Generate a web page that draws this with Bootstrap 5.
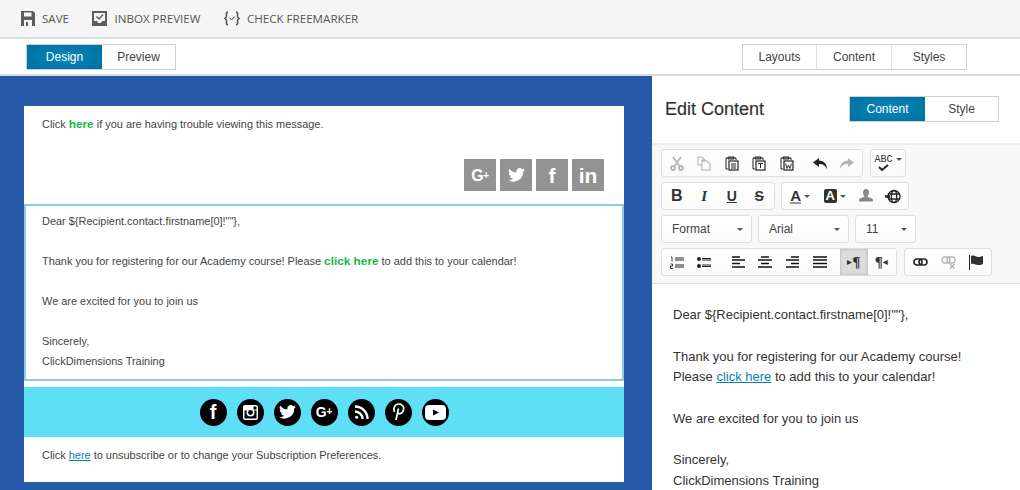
<!DOCTYPE html>
<html lang="en"><head><meta charset="utf-8"><title>Email editor</title>
<link href="https://cdn.jsdelivr.net/npm/bootstrap@5.3.0/dist/css/bootstrap.min.css" rel="stylesheet">
<style>
html,body{height:490px;overflow:hidden}
body{font-family:"Liberation Sans",Arial,sans-serif;font-size:12px;color:#333;background:#fff}
.cmdbar{height:39px;background:#f5f5f5;border-bottom:2px solid #ddd;padding-left:21px;gap:23.400px;font-family:"Open Sans",sans-serif;font-size:11.600px;color:#555}
.cmd{gap:7px}
.tabrow{height:37px;border-bottom:2px solid #ddd;padding:5px 53px 0 26px}
.seg{height:26px;border:1px solid #d0d0d0;display:flex;color:#444;background:#fff;margin-bottom:4px}
.seg>span{display:flex;align-items:center;justify-content:center}
.seg>.on{background:radial-gradient(ellipse at center,#0a83b5 0,#0077a9 70%,#00709f 100%);color:#fff}
.s75{width:75px}.s73{width:73px}.s74{width:74px}
.main{height:414px}
.canvas{width:652px;background:#265aa9;padding:30px 28px 8px 24px;flex:none}
.mail{width:600px;height:376px;background:#fff;font-size:10.950px;color:#444}
.mhead{height:98px;padding:12px 20px 0 18px;line-height:13px}
.mhead b{color:#17b84a;font-size:11.800px}
.shares{gap:4px;margin-top:28px}
.sq{width:32px;height:32px;background:#939393;color:#fff;display:flex;align-items:center;justify-content:center;font-weight:700}
.gp{font-size:16px;letter-spacing:-.3px}
.gp small,.gd small{font-size:10px;vertical-align:2px}
.ff{font-size:21px}
.ii{font-size:21px}
.gd{font-size:14px}
.block{height:177px;border:2px solid #8fc9e4;padding:5px 16px 0;line-height:20px}
.block p{margin:0 0 20px}
.block p.tight{margin:0}
.block b{color:#17b84a;font-size:11.800px}
.band{height:50px;background:#5fdff5;margin-top:6px;gap:10px}
.dot{width:27px;height:27px;border-radius:50%;background:#000;color:#fff;display:flex;align-items:center;justify-content:center;font-weight:700}
.mfoot{padding:12px 0 0 18px;line-height:13px}
.mfoot a,.rbody a{color:#0b7db0}
.side{width:368px;flex:none}
.shead{height:67px;padding:20px 21px 0 13px}
.shead h1{font-size:18px;margin:3px 0 0;font-weight:400;color:#333;-webkit-text-stroke:.2px #333}
.shead .seg{width:150px}
.tools{height:141px;background:#f8f8f8;border-top:2px solid #eee;border-bottom:1px solid #ddd;padding:4px 0 0 9px;gap:5px}
.tline{gap:7px;height:28px}
.tline.six{gap:6px}
.tg{height:28px;border:1px solid #dfdfdf;border-radius:3px;background:linear-gradient(#fff,#fafafa);display:flex;align-items:center;padding:0 1px}
.tb{width:27.500px;height:26px;display:flex;align-items:center;justify-content:center;color:#333;font-size:15px;font-weight:700;font-family:"Liberation Serif",serif}
.tb.arrow{width:34.500px}
.tb.spell{width:32px}
.tb.act{background:#dcdcdc;box-shadow:inset 0 0 3px #aaa}
.tb.w28{width:28px}
.sp1{width:5.500px}
.sp2{width:6px}
.dim{opacity:.32}
.caret{width:0;height:0;border:3px solid transparent;border-top-color:#555;border-bottom:0;margin-left:3px}
.sel{justify-content:space-between;padding:0 8px 0 10px;font-size:12px;color:#444}
.w91{width:91px}.w61{width:61px}
.sans{font-family:"Liberation Sans",sans-serif}
.abc{font:10px/9px "Liberation Mono",monospace}
.tri{font-size:6px}
.aline{border-bottom:2px solid #999;line-height:13px}
.abg{background:#333;color:#fff;border-radius:2px;padding:0 2px;line-height:14px;font-size:13px}
.rbody{padding:21px 20px 0 21px;font-size:13px;line-height:20.750px;color:#333}
.rbody p{margin:0 0 20.750px}
.rbody p.tight{margin:0}
.s14{font-size:14px}
</style></head><body>
<div class="cmdbar d-flex align-items-center">
 <div class="cmd d-flex align-items-center"><svg width="14" height="15" viewBox="0 0 14 15"><path fill="#5c5c5c" d="M0 0h12l2 2v13H0zM3 1.500v4h7.500v-4zM3 9v6h8V9z"/><rect x="5" y="11" width="2" height="4" fill="#5c5c5c"/></svg><span>SAVE</span></div>
 <div class="cmd d-flex align-items-center"><svg width="15" height="15" viewBox="0 0 15 15"><path fill="#5c5c5c" d="M0 0h15v15H0z"/><path fill="#f5f5f5" d="M2 2h11v8h-3l-1 2H6l-1-2H2z"/><path fill="none" stroke="#5c5c5c" stroke-width="1.500" d="M4.500 5.500l2.500 2.500 4-4.500"/></svg><span>INBOX PREVIEW</span></div>
 <div class="cmd d-flex align-items-center"><svg width="16" height="15" viewBox="0 0 16 15" fill="none" stroke="#555" stroke-width="1.600"><path d="M4 1C2 1 2.500 3 2.500 5S1 7.500 1 7.500 2.500 8 2.500 10 2 14 4 14M12 1c2 0 1.500 2 1.500 4S15 7.500 15 7.500 13.500 8 13.500 10 14 14 12 14"/><path d="M5.500 6.500L7.500 9l3-3.500" stroke-width="1"/></svg><span>CHECK FREEMARKER</span></div>
</div>
<div class="tabrow d-flex justify-content-between">
 <div class="seg"><span class="on s75">Design</span><span class="s73">Preview</span></div>
 <div class="seg"><span class="s74 border-end">Layouts</span><span class="s75 border-end">Content</span><span class="s74">Styles</span></div>
</div>
<div class="main d-flex">
 <div class="canvas">
  <div class="mail">
   <div class="mhead">
    <div>Click <b>here</b> if you are having trouble viewing this message.</div>
    <div class="shares d-flex justify-content-end">
     <span class="sq gp"><span>G<small>+</small></span></span>
     <span class="sq"><svg width="17" height="14" viewBox="0 0 24 20"><path fill="#fff" d="M24 2.400c-.9.400-1.800.700-2.800.800 1-.6 1.800-1.600 2.200-2.700-1 .6-2 1-3.100 1.200A4.900 4.900 0 0 0 11.900 6.200 14 14 0 0 1 1.700.900a4.900 4.900 0 0 0 1.500 6.600c-.8 0-1.600-.2-2.200-.6 0 2.400 1.700 4.400 3.900 4.900-.7.200-1.500.2-2.200.1.600 2 2.400 3.400 4.600 3.400A9.900 9.900 0 0 1 0 17.300 14 14 0 0 0 21.500 4.900c1-.7 1.800-1.500 2.500-2.500z"/></svg></span>
     <span class="sq ff">f</span>
     <span class="sq ii">in</span>
    </div>
   </div>
   <div class="block">
    <p>Dear ${Recipient.contact.firstname[0]!""},</p>
    <p>Thank you for registering for our Academy course! Please <b>click here</b> to add this to your calendar!</p>
    <p>We are excited for you to join us</p>
    <p class="tight">Sincerely,</p>
    <p class="tight">ClickDimensions Training</p>
   </div>
   <div class="band d-flex align-items-center justify-content-center">
    <span class="dot fs-5">f</span>
    <span class="dot"><svg width="17" height="17" viewBox="0 0 17 17"><rect x="1" y="1" width="15" height="15" rx="2" fill="#fff"/><rect x="2.500" y="6.500" width="12" height="8" fill="#000"/><circle cx="8.500" cy="8.500" r="4" fill="#fff"/><circle cx="8.500" cy="8.500" r="2.400" fill="#000"/><rect x="11.500" y="2.500" width="3" height="3" fill="#000"/></svg></span>
    <span class="dot"><svg width="17" height="14" viewBox="0 0 24 20"><path fill="#fff" d="M24 2.400c-.9.400-1.800.700-2.800.800 1-.6 1.800-1.600 2.200-2.700-1 .6-2 1-3.100 1.200A4.900 4.900 0 0 0 11.900 6.200 14 14 0 0 1 1.700.900a4.900 4.900 0 0 0 1.500 6.600c-.8 0-1.600-.2-2.200-.6 0 2.400 1.700 4.400 3.900 4.900-.7.200-1.500.2-2.200.1.600 2 2.400 3.400 4.600 3.400A9.900 9.900 0 0 1 0 17.300 14 14 0 0 0 21.500 4.900c1-.7 1.800-1.500 2.500-2.500z"/></svg></span>
    <span class="dot gd"><span>G<small>+</small></span></span>
    <span class="dot"><svg width="15" height="15" viewBox="0 0 15 15" fill="none" stroke="#fff" stroke-width="2.400"><path d="M1 6.500A7.500 7.500 0 0 1 8.500 14M1 1.500A12.500 12.500 0 0 1 13.500 14"/><circle cx="2.700" cy="12.300" r="1.500" fill="#fff" stroke="none"/></svg></span>
    <span class="dot"><svg width="13" height="18" viewBox="0 0 13 18" fill="none" stroke="#fff" stroke-width="1.700"><path d="M2.500 9C.5 5 3 1 6.800 1s5.400 3 4.700 6c-.7 3-3.500 4.500-5.500 3.200M6.500 5.500L4 17"/></svg></span>
    <span class="dot"><svg width="21" height="15" viewBox="0 0 21 15"><rect width="21" height="15" rx="4" fill="#fff"/><path d="M8 4.500l6 3-6 3z" fill="#000"/></svg></span>
   </div>
   <div class="mfoot">Click <a href="#">here</a> to unsubscribe or to change your Subscription Preferences.</div>
  </div>
 </div>
 <div class="side">
  <div class="shead d-flex justify-content-between">
   <h1>Edit Content</h1>
   <div class="seg"><span class="on s75">Content</span><span class="s73">Style</span></div>
  </div>
  <div class="tools d-flex flex-column">
   <div class="tline d-flex">
    <div class="tg">
     <span class="tb dim"><svg width="14" height="15" viewBox="0 0 14 15" fill="none" stroke="#222" stroke-width="1.800"><path d="M3 1l6.500 9M11 1L4.500 10"/><circle cx="3" cy="12" r="2"/><circle cx="11" cy="12" r="2"/></svg></span>
     <span class="tb dim"><svg width="14" height="15" viewBox="0 0 14 15" fill="none" stroke="#222" stroke-width="1.100"><path d="M1 1h4l3 3H5v5H1zM5 5h5l3 3v6H5z"/></svg></span>
     <span class="tb"><svg width="14" height="15" viewBox="0 0 14 15" fill="none" stroke="#222"><path d="M3 13H1V2h10v2M3 1h6v2H3z"/><rect x="4" y="5" width="9" height="9" stroke-width="1.200"/><path d="M6 8h5M6 10h5M6 12h5"/></svg></span>
     <span class="tb"><svg width="14" height="15" viewBox="0 0 14 15" fill="none" stroke="#222"><path d="M3 13H1V2h10v2M3 1h6v2H3z"/><rect x="4" y="5" width="9" height="9" stroke-width="1.200"/><path d="M6 7.500h5M8.500 7.500V12" /></svg></span>
     <span class="tb"><svg width="14" height="15" viewBox="0 0 14 15" fill="none" stroke="#222"><path d="M3 13H1V2h10v2M3 1h6v2H3z"/><rect x="4" y="5" width="9" height="9" stroke-width="1.200"/><path d="M5.500 7.500l1.500 5 1.500-3.500 1.500 3.500 1.500-5" stroke-width=".9"/></svg></span>
     <span class="sp1"></span>
     <span class="tb"><svg width="14" height="11" viewBox="0 0 14 11"><path fill="#222" d="M6 0L0 4.500 6 9V6c3.500 0 6 1 8 5 0-5-3-8-8-8.500z"/></svg></span>
     <span class="tb dim"><svg width="14" height="11" viewBox="0 0 14 11"><path fill="#222" d="M8 0l6 4.500L8 9V6c-3.500 0-6 1-8 5 0-5 3-8 8-8.500z"/></svg></span>
    </div>
    <div class="tg"><span class="tb spell flex-column"><span class="d-flex align-items-center"><span class="abc">ABC</span><span class="caret"></span></span><svg width="18" height="8" viewBox="0 0 18 8" class="me-2"><path d="M4 3l3 3 6-5" fill="none" stroke="#222" stroke-width="2"/></svg></span></div>
   </div>
   <div class="tline six d-flex">
    <div class="tg">
     <span class="tb sans fs-6">B</span>
     <span class="tb fst-italic">I</span>
     <span class="tb text-decoration-underline sans s14">U</span>
     <span class="tb text-decoration-line-through sans s14">S</span>
    </div>
    <div class="tg">
     <span class="tb arrow sans"><span class="aline">A</span><span class="caret"></span></span>
     <span class="tb arrow sans"><span class="abg">A</span><span class="caret"></span></span>
     <span class="tb"><svg width="14" height="14" viewBox="0 0 14 14"><path fill="#888" d="M7 0c2 0 3 1.500 3 3.500 0 2-1 3-1.500 4 .5 1 5.500 1.500 5.500 3.500v1.500H0V11c0-2 5-2.500 5.500-3.500C5 6.500 4 5.500 4 3.500 4 1.500 5 0 7 0z"/></svg></span>
     <span class="tb"><svg width="16" height="15" viewBox="0 0 16 15" fill="none" stroke="#222" stroke-width="1.300"><circle cx="9" cy="7.500" r="6"/><ellipse cx="9" cy="7.500" rx="2.700" ry="6"/><path d="M3 5h12M3 10h12"/><path d="M0 7.500h5" stroke-width="2.500"/></svg></span>
    </div>
   </div>
   <div class="tline six d-flex">
    <div class="tg sel w91">Format<span class="caret"></span></div>
    <div class="tg sel w91">Arial<span class="caret"></span></div>
    <div class="tg sel w61"><span>11</span><span class="caret"></span></div>
   </div>
   <div class="tline d-flex">
    <div class="tg">
     <span class="tb"><svg width="14" height="13" viewBox="0 0 14 13" fill="none" stroke="#222"><path d="M5 2h9M5 4h9M5 9h9M5 11h9" stroke-width="1.200"/><path d="M1 1h1v4.500M.500 8h2v2h-2v2.500h2.500" stroke-width=".9"/></svg></span>
     <span class="tb"><svg width="14" height="13" viewBox="0 0 14 13" fill="none" stroke="#222"><path d="M5 2.500h9M5 4h9M5 9h9M5 10.500h9" stroke-width="1.100"/><circle cx="2" cy="3" r="2" fill="#222" stroke="none"/><circle cx="2" cy="10" r="2" fill="#222" stroke="none"/></svg></span>
     <span class="sp2"></span>
     <span class="tb"><svg width="14" height="12" viewBox="0 0 14 12" stroke="#111" stroke-width="1.700"><path d="M1 1h8M1 4h13M1 7.500h8M1 11h13"/></svg></span>
     <span class="tb"><svg width="14" height="12" viewBox="0 0 14 12" stroke="#111" stroke-width="1.700"><path d="M3 1h8M0 4h14M3 7.500h8M0 11h14"/></svg></span>
     <span class="tb"><svg width="14" height="12" viewBox="0 0 14 12" stroke="#111" stroke-width="1.700"><path d="M5 1h8M0 4h13M5 7.500h8M0 11h13"/></svg></span>
     <span class="tb"><svg width="14" height="12" viewBox="0 0 14 12" stroke="#111" stroke-width="1.700"><path d="M0 1h14M0 4h14M0 7.500h14M0 11h14"/></svg></span>
     <span class="sp2"></span>
     <span class="tb act"><span class="tri">&#9654;</span>&para;</span>
     <span class="tb">&para;<span class="tri">&#9664;</span></span>
    </div>
    <div class="tg">
     <span class="tb w28"><svg width="15" height="8" viewBox="0 0 15 8" fill="none" stroke="#222" stroke-width="1.600"><rect x="1" y="1" width="8" height="6" rx="3"/><rect x="6" y="1" width="8" height="6" rx="3"/></svg></span>
     <span class="tb w28 dim"><svg width="15" height="13" viewBox="0 0 15 13" fill="none" stroke="#222" stroke-width="1.400"><rect x="1" y="1" width="8" height="6" rx="3"/><rect x="6" y="1" width="8" height="6" rx="3"/><path d="M9 8l4.500 4.500M13.500 8L9 12.500"/></svg></span>
     <span class="tb w28"><svg width="14" height="15" viewBox="0 0 14 15"><path d="M.5 0v15" stroke="#222"/><path fill="#333" d="M2 1c3-1.500 5 1 7 1s3-.5 5-1v8c-2 1-3 1-5 1S5 8 2 9z"/></svg></span>
    </div>
   </div>
  </div>
  <div class="rbody">
   <p>Dear ${Recipient.contact.firstname[0]!""},</p>
   <p>Thank you for registering for our Academy course! Please <a href="#">click here</a> to add this to your calendar!</p>
   <p>We are excited for you to join us</p>
   <p class="tight">Sincerely,</p>
   <p class="tight">ClickDimensions Training</p>
  </div>
 </div>
</div>
<script src="https://cdn.jsdelivr.net/npm/bootstrap@5.3.0/dist/js/bootstrap.bundle.min.js"></script>
</body></html>
